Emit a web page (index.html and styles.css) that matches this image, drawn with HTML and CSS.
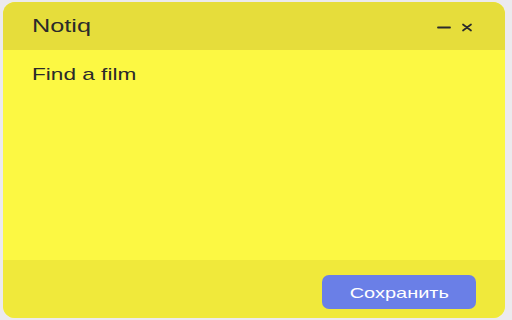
FILE: index.html
```html
<!DOCTYPE html>
<html>
<head>
<meta charset="utf-8">
<link rel="stylesheet" href="styles.css">
</head>
<body>
<div class="note">
  <div class="header">
    <span class="title wide">Notiq</span>
    <div class="controls">
      <svg class="icon" width="14" height="14" viewBox="0 0 14 14"><path d="M1 7.5H13" stroke="#2b2b2b" stroke-width="1.8" stroke-linecap="round"/></svg>
      <svg class="icon" width="12" height="12" viewBox="0 0 12 12"><path d="M2 3.5L10 9.5M10 3.5L2 9.5" stroke="#2b2b2b" stroke-width="1.7" stroke-linecap="round"/></svg>
    </div>
  </div>
  <div class="body"><span class="wide">Find a film</span></div>
  <div class="footer">
    <button class="save"><span class="wide-c">Сохранить</span></button>
  </div>
</div>
</body>
</html>
```
FILE: styles.css
```css
html, body {
  margin: 0;
  padding: 0;
}
body {
  width: 512px;
  height: 320px;
  background: #eceaee;
  font-family: "Liberation Sans", Arial, sans-serif;
  padding: 2px 7px 2px 3px;
  box-sizing: border-box;
}
.note {
  height: 316px;
  border-radius: 12px;
  overflow: hidden;
  display: flex;
  flex-direction: column;
  background: #fcf843;
}
.wide {
  display: inline-block;
  transform: scaleX(1.33);
  transform-origin: left center;
}
.wide-c {
  display: inline-block;
  transform: scaleX(1.33);
  transform-origin: center center;
}
.header {
  height: 48px;
  background: #e6dd3b;
  display: flex;
  align-items: center;
  justify-content: space-between;
  padding: 0 32px 0 29px;
}
.title {
  font-size: 19px;
  color: #2a2a2a;
}
.controls {
  display: flex;
  align-items: center;
  gap: 10px;
  margin-top: 2px;
}
.body {
  flex: 1;
  padding: 15px 29px;
  font-size: 17px;
  color: #2a2a2a;
}
.footer {
  height: 58px;
  background: #f0e93b;
  display: flex;
  align-items: center;
  justify-content: flex-end;
  padding: 0 29px 0 0;
}
.save {
  width: 154px;
  height: 34px;
  border: none;
  border-radius: 7px;
  background: #6a7fe7;
  color: #fff;
  font-family: "Liberation Sans", Arial, sans-serif;
  font-size: 15px;
  margin-top: 6px;
}
```
